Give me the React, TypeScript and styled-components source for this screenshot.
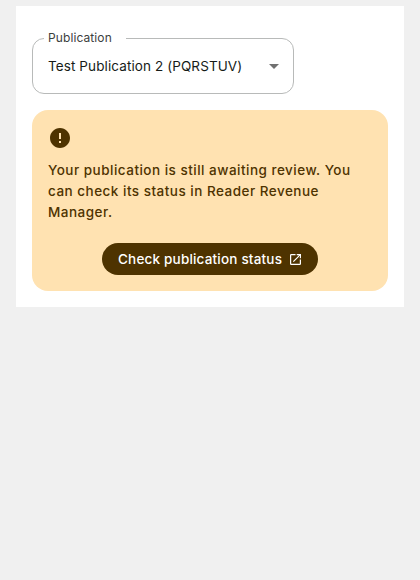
import React from "react";
import styled, { createGlobalStyle } from "styled-components";

const GlobalStyle = createGlobalStyle`
  *, *::before, *::after { box-sizing: border-box; }
  body {
    margin: 0;
    background: #f0f0f0;
    font-family: Inter, Roboto, sans-serif;
  }
`;

const Panel = styled.main`
  display: flex;
  flex-direction: column;
  align-items: flex-start;
  gap: 16px;
  width: 388px;
  height: 301px;
  margin: 6px 16px 0;
  padding: 32px 16px 16px;
  background: #fff;
`;

const Select = styled.button`
  position: relative;
  display: flex;
  align-items: center;
  justify-content: space-between;
  width: 262px;
  height: 56px;
  padding: 0 14px 0 15px;
  border: 1px solid #b8bab9;
  border-radius: 12px;
  background: #fff;
  color: #161b18;
  font: 400 13.5px/20px Inter, Roboto, sans-serif;
`;

const FloatingLabel = styled.span`
  position: absolute;
  top: -11px;
  left: 11px;
  width: 82px;
  padding-left: 4px;
  background: #fff;
  color: #3c403d;
  text-align: left;
  font-size: 12px;
  line-height: 20px;
  letter-spacing: 0.1px;
  white-space: nowrap;
`;

const Value = styled.span`
  letter-spacing: 0.1px;
  white-space: nowrap;
`;

const Notice = styled.section`
  display: flex;
  flex-direction: column;
  width: 356px;
  height: 181px;
  padding: 16px;
  border-radius: 16px;
  background: #ffe2b1;
  color: #4e3300;
`;

const Message = styled.p`
  margin: 10px 0 20px;
  font-size: 13.5px;
  font-weight: 500;
  line-height: 21px;
  letter-spacing: 0.49px;
  white-space: nowrap;
`;

const StatusButton = styled.a`
  display: flex;
  align-items: center;
  align-self: center;
  justify-content: space-between;
  width: 216px;
  height: 32px;
  padding: 0 17px 0 16px;
  border-radius: 16px;
  background: #4e3300;
  color: #fff;
  font-size: 13.5px;
  font-weight: 500;
  line-height: 20px;
  letter-spacing: 0.19px;
  white-space: nowrap;
`;

const Icon = styled.svg`
  display: block;
  flex: none;
`;

export default function App() {
  return (
    <>
      <GlobalStyle />
      <Panel>
        <Select type="button">
          <FloatingLabel>Publication</FloatingLabel>
          <Value>Test Publication 2 (PQRSTUV)</Value>
          <Icon width="10" height="5" viewBox="0 0 10 5">
            <path d="M0 0h10L5 5z" fill="#707070" />
          </Icon>
        </Select>
        <Notice>
          <Icon width="24" height="24" viewBox="0 0 24 24" fill="currentColor">
            <path d="M12 2C6.48 2 2 6.48 2 12s4.48 10 10 10 10-4.48 10-10S17.52 2 12 2zm1 15h-2v-2h2v2zm0-4h-2V7h2v6z" />
          </Icon>
          <Message>
            Your publication is still awaiting review. You
            <br />
            can check its status in Reader Revenue
            <br />
            Manager.
          </Message>
          <StatusButton>
            <span>Check publication status</span>
            <Icon width="11" height="11" viewBox="3 3 18 18" fill="currentColor">
              <path d="M19 19H5V5h7V3H5a2 2 0 0 0-2 2v14a2 2 0 0 0 2 2h14c1.1 0 2-.9 2-2v-7h-2v7zM14 3v2h3.59l-9.83 9.83 1.41 1.41L19 6.41V10h2V3h-7z" />
            </Icon>
          </StatusButton>
        </Notice>
      </Panel>
    </>
  );
}
